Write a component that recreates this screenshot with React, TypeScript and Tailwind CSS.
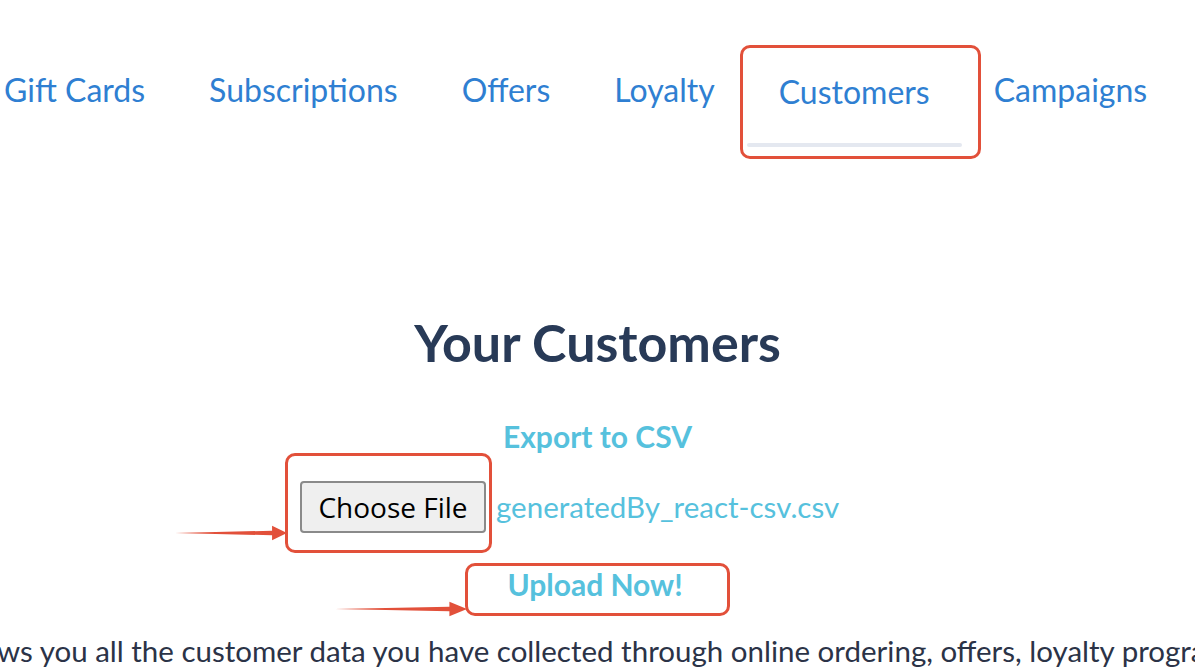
import React from "react";

const tabs = ["Gift Cards", "Subscriptions", "Offers", "Loyalty", "Customers", "Campaigns"];

function Arrow({ className }: { className: string }) {
  // red annotation arrow, thin tail getting thicker towards the head
  return (
    <svg className={className} viewBox="0 0 120 20" preserveAspectRatio="none">
      <polygon points="0,10 104,7.5 104,2 120,10 104,18 104,12.5" fill="#e2503a" />
    </svg>
  );
}

export default function App() {
  const active = "Customers";

  return (
    <div className="relative w-[1195px] h-[672px] overflow-hidden bg-white font-['Lato','Liberation_Sans',sans-serif]">
      <nav className="flex items-start pt-[67px] -ml-[28px]">
        {tabs.map((t) => (
          <div key={t} className="relative px-8">
            <div className={"text-[32px] leading-[46px] text-[#2f7fd2] whitespace-nowrap " + (t === active ? "mt-[2px]" : "")}>
              {t}
            </div>
            {t === active && (
              <>
                <div className="mt-[28px] -mx-8 h-[4px] bg-[#e4e8f0] rounded" />
                <div className="absolute -left-[7px] -right-[19px] -top-[22px] -bottom-[12px] border-[3px] border-[#e2503a] rounded-[10px]" />
              </>
            )}
          </div>
        ))}
      </nav>

      <h1 className="mt-[165px] text-center text-[52px] leading-[60px] font-bold text-[#283a57]">Your Customers</h1>

      <div className="mt-[46px] text-center text-[30px] leading-[36px] font-bold text-[#56c1dd]">Export to CSV</div>

      <div className="mt-[27px] flex items-center pl-[300px]">
        <div className="relative">
          <button className="h-[52px] w-[186px] bg-[#efefef] border-2 border-[#8a8a8a] rounded-[4px] text-[28px] text-black font-['Open_Sans','Noto_Sans',sans-serif]">
            Choose File
          </button>
          <div className="absolute -left-[15px] -right-[6px] -top-[28px] -bottom-[20px] border-[3px] border-[#e2503a] rounded-[10px]" />
        </div>
        <span className="ml-[10px] text-[29.5px] text-[#56c1dd]">generatedBy_react-csv.csv</span>
      </div>

      <div className="mt-[33px] flex justify-center">
        <div className="relative -ml-[5px]">
          <span className="block text-[30px] leading-[36px] font-bold text-[#56c1dd]">Upload Now!</span>
          <div className="absolute -left-[42px] -right-[47px] -top-[3px] -bottom-[14px] border-[3px] border-[#e2503a] rounded-[10px]" />
        </div>
      </div>

      <div className="mt-[31px] overflow-hidden">
        <p className="whitespace-nowrap text-[29.5px] leading-[36px] text-[#2b3347] -ml-[3px]">
          ws you all the customer data you have collected through online ordering, offers, loyalty programs and more.
        </p>
      </div>

      <Arrow className="absolute left-[175px] top-[524px] w-[112px] h-[18px]" />
      <Arrow className="absolute left-[335px] top-[600px] w-[132px] h-[18px]" />
    </div>
  );
}
